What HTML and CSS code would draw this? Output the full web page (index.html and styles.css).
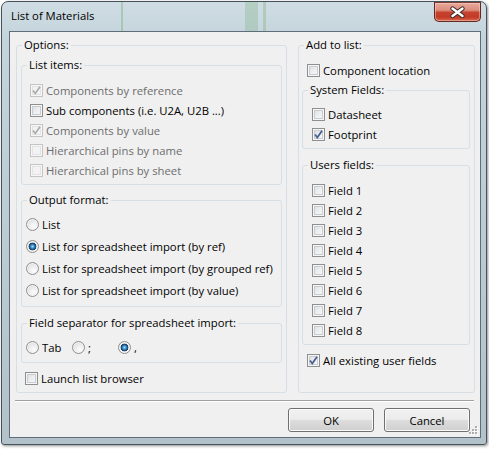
FILE: index.html
```html
<!DOCTYPE html>
<html>
<head>
<meta charset="utf-8">
<link rel="stylesheet" href="styles.css">
</head>
<body>
<div class="window">
  <div class="titlebar">
    <span class="title">List of Materials</span>
    <span class="close"><svg width="47" height="19" viewBox="0 0 47 19"><path d="M18.5 5.5 L28.5 13 M28.5 5.5 L18.5 13" stroke="#3b2a28" stroke-width="4.4" stroke-linecap="round" fill="none"/><path d="M18.5 5.5 L28.5 13 M28.5 5.5 L18.5 13" stroke="#ffffff" stroke-width="2.4" stroke-linecap="round" fill="none"/></svg></span>
  </div>
  <div class="client">
    <div class="columns">
      <div class="group options">
        <div class="caption">Options:</div>
        <div class="options-body">
          <div class="group list-items">
            <div class="caption">List items:</div>
            <div class="list-body">
              <label class="row disabled"><span class="cb"><svg width="11" height="11" viewBox="0 0 11 11"><path d="M2 5.5 L4.3 8.5 L9 1.8" stroke="#a9a9a9" stroke-width="1.6" fill="none"/></svg></span>Components by reference</label>
              <label class="row"><span class="cb"></span>Sub components (i.e. U2A, U2B ...)</label>
              <label class="row disabled"><span class="cb"><svg width="11" height="11" viewBox="0 0 11 11"><path d="M2 5.5 L4.3 8.5 L9 1.8" stroke="#a9a9a9" stroke-width="1.6" fill="none"/></svg></span>Components by value</label>
              <label class="row disabled"><span class="cb"></span>Hierarchical pins by name</label>
              <label class="row disabled"><span class="cb"></span>Hierarchical pins by sheet</label>
            </div>
          </div>
          <div class="group output">
            <div class="caption">Output format:</div>
            <div class="output-body">
              <label class="row rrow"><span class="rb"></span>List</label>
              <label class="row rrow"><span class="rb on"></span>List for spreadsheet import (by ref)</label>
              <label class="row rrow"><span class="rb"></span>List for spreadsheet import (by grouped ref)</label>
              <label class="row rrow"><span class="rb"></span>List for spreadsheet import (by value)</label>
            </div>
          </div>
          <div class="group sep">
            <div class="caption">Field separator for spreadsheet import:</div>
            <div class="sep-body">
              <label class="row rrow sepitem"><span class="rb"></span>Tab</label>
              <label class="row rrow sepitem"><span class="rb"></span>;</label>
              <label class="row rrow sepitem"><span class="rb on"></span>,</label>
            </div>
          </div>
          <label class="row launch"><span class="cb"></span>Launch list browser</label>
        </div>
      </div>
      <div class="group add">
        <div class="caption">Add to list:</div>
        <div class="add-body">
          <label class="row indent"><span class="cb"></span>Component location</label>
          <div class="group system">
            <div class="caption">System Fields:</div>
            <div class="fields-body">
              <label class="row"><span class="cb"></span>Datasheet</label>
              <label class="row"><span class="cb"><svg width="11" height="11" viewBox="0 0 11 11"><path d="M2 5.5 L4.3 8.5 L9 1.8" stroke="#4a5f92" stroke-width="1.8" fill="none"/></svg></span>Footprint</label>
            </div>
          </div>
          <div class="group users">
            <div class="caption">Users fields:</div>
            <div class="fields-body users-body">
              <label class="row"><span class="cb"></span>Field 1</label>
              <label class="row"><span class="cb"></span>Field 2</label>
              <label class="row"><span class="cb"></span>Field 3</label>
              <label class="row"><span class="cb"></span>Field 4</label>
              <label class="row"><span class="cb"></span>Field 5</label>
              <label class="row"><span class="cb"></span>Field 6</label>
              <label class="row"><span class="cb"></span>Field 7</label>
              <label class="row"><span class="cb"></span>Field 8</label>
            </div>
          </div>
          <label class="row indent all"><span class="cb"><svg width="11" height="11" viewBox="0 0 11 11"><path d="M2 5.5 L4.3 8.5 L9 1.8" stroke="#4a5f92" stroke-width="1.8" fill="none"/></svg></span>All existing user fields</label>
        </div>
      </div>
    </div>
    <div class="separator"></div>
    <div class="buttons">
      <button class="btn">OK</button>
      <button class="btn">Cancel</button>
    </div>
    <span class="grip"><svg width="9" height="9" viewBox="0 0 9 9"><g fill="#fff"><rect x="7" y="1" width="2" height="2"/><rect x="7" y="4" width="2" height="2"/><rect x="4" y="4" width="2" height="2"/><rect x="7" y="7" width="2" height="2"/><rect x="4" y="7" width="2" height="2"/><rect x="1" y="7" width="2" height="2"/></g><g fill="#a9aeb3"><rect x="6" y="0" width="2" height="2"/><rect x="6" y="3" width="2" height="2"/><rect x="3" y="3" width="2" height="2"/><rect x="6" y="6" width="2" height="2"/><rect x="3" y="6" width="2" height="2"/><rect x="0" y="6" width="2" height="2"/></g></svg></span>
  </div>
</div>
</body>
</html>
```

FILE: styles.css
```css
* { box-sizing: border-box; }
html, body { margin: 0; padding: 0; }
body {
  width: 489px;
  height: 449px;
  overflow: hidden;
  background: #ffffff;
  font-family: "Open Sans", "Noto Sans", sans-serif;
  font-size: 11.3px;
  color: #000;
}

.window {
  margin: 1px 0 0 1px;
  width: 486px;
  height: 444px;
  border: 1px solid #47535c;
  border-radius: 7px 7px 3px 3px;
  padding: 0 5px 6px 7px;
  display: flex;
  flex-direction: column;
  box-shadow: 1px 1px 3px rgba(0, 0, 0, 0.45);
  background:
    linear-gradient(to right,
      transparent 119px, rgba(90, 160, 90, 0.3) 119px, rgba(90, 160, 90, 0.3) 121px, transparent 121px,
      transparent 243px, rgba(120, 175, 125, 0.3) 243px, rgba(120, 175, 125, 0.3) 256px, transparent 256px,
      transparent 261px, rgba(110, 170, 110, 0.3) 261px, rgba(110, 170, 110, 0.3) 264px, transparent 264px) 0 0 / 100% 31px no-repeat,
    linear-gradient(to bottom, #cfdce3 0%, #c5d4dc 8%, #bac9d2 60%, #b3c1ca 100%);
}

.titlebar {
  height: 29px;
  display: flex;
  justify-content: space-between;
  align-items: flex-start;
  flex: none;
}
.title {
  padding: 6px 0 0 2px;
  line-height: 16px;
  color: #000;
}
.close {
  width: 47px;
  height: 20px;
  border: 1px solid #5e2a22;
  border-top-color: #7a3e34;
  border-radius: 0 0 5px 5px;
  background: linear-gradient(to bottom, #e9a99b 0%, #dc8d7c 40%, #c6432f 52%, #c23a26 78%, #d8684c 100%);
  box-shadow: inset 0 0 0 1px rgba(255, 220, 210, 0.45);
  display: flex;
  align-items: center;
  justify-content: center;
}
.close svg { display: block; margin: -1px; }

.client {
  position: relative;
  flex: 1;
  border: 1px solid #5f6d78;
  background: #f0f0f0;
  display: flex;
  flex-direction: column;
}

.columns {
  display: flex;
  gap: 11px;
  padding: 13px 5px 0 6px;
  align-items: stretch;
}

.group {
  border: 1px solid #d5dfe5;
  border-radius: 3px;
}
.caption {
  width: fit-content;
  margin: -9px 0 0 5px;
  padding: 0 2px;
  height: 16px;
  line-height: 16px;
  background: #f0f0f0;
  white-space: nowrap;
}

.options { width: 271px; flex: none; }
.add { width: 177px; flex: none; }

.options-body { padding: 0 4px 4px 4px; }
.list-items { margin-top: 12px; }
.list-body { padding: 7px 0 4px 8px; }
.output { margin-top: 15px; }
.output-body { padding: 5px 0 5px 4px; }
.sep { margin-top: 16px; }
.sep-body { padding: 5px 0 4px 4px; display: flex; }
.sepitem { width: 46px; }
.launch { margin: 5px 0 0 4px; }

.add-body { padding: 7px 4px 4px 3px; }
.indent { margin-left: 5px; }
.system { margin-top: 10px; }
.fields-body { padding: 6px 0 4px 9px; }
.users { margin-top: 16px; }
.users-body { padding-top: 7px; }
.all { margin-top: 5px; }

.row {
  display: flex;
  align-items: center;
  gap: 3px;
  height: 20px;
  white-space: nowrap;
}
.rrow { height: 22px; }
.row.disabled { color: #6d6d6d; }

.cb {
  flex: none;
  width: 13px;
  height: 13px;
  border: 1px solid #8e8f8f;
  background: linear-gradient(135deg, #d6d8da 0%, #eceeef 50%, #fafafa 100%);
  box-shadow: inset 0 0 0 1px #f6f6f6, inset 0 0 0 2px #c9cdd1;
  display: flex;
  align-items: center;
  justify-content: center;
}
.cb svg { display: block; }
.disabled .cb {
  border-color: #c4c4c4;
  background: #f3f3f3;
  box-shadow: inset 0 0 0 1px #f7f7f7, inset 0 0 0 2px #e3e3e3;
}

.rb {
  flex: none;
  width: 13px;
  height: 13px;
  border-radius: 50%;
  border: 1px solid #8e8f8f;
  background: radial-gradient(circle at 62% 68%, #fdfdfd 0%, #eeeeee 40%, #d2d2d2 100%);
  box-shadow: inset 0 0 0 1px #f4f4f4;
}
.rb.on {
  background:
    radial-gradient(circle at 50% 50%, #a8e0fa 0px, #3c95d6 1.6px, #175a98 2.9px, #26384a 3.6px, rgba(38, 56, 74, 0) 4.2px),
    radial-gradient(circle at 62% 68%, #fdfdfd 0%, #eeeeee 40%, #d2d2d2 100%);
}

.separator {
  margin: 7px 6px 0 5px;
  height: 2px;
  border-top: 1px solid #a0a0a0;
  border-bottom: 1px solid #ffffff;
}

.buttons {
  display: flex;
  justify-content: flex-end;
  gap: 10px;
  padding: 6px 10px 0 0;
}
.btn {
  width: 86px;
  height: 24px;
  margin: 0;
  padding: 0;
  border: 1px solid #707070;
  border-radius: 3px;
  font-family: inherit;
  font-size: 11.3px;
  color: #000;
  background: linear-gradient(to bottom, #f2f2f2 0%, #ebebeb 50%, #dddddd 51%, #cfcfcf 100%);
  box-shadow: inset 0 0 0 1px #fbfbfb;
}

.grip {
  position: absolute;
  right: 2px;
  bottom: 2px;
  width: 9px;
  height: 9px;
}
.grip svg { display: block; }
```
